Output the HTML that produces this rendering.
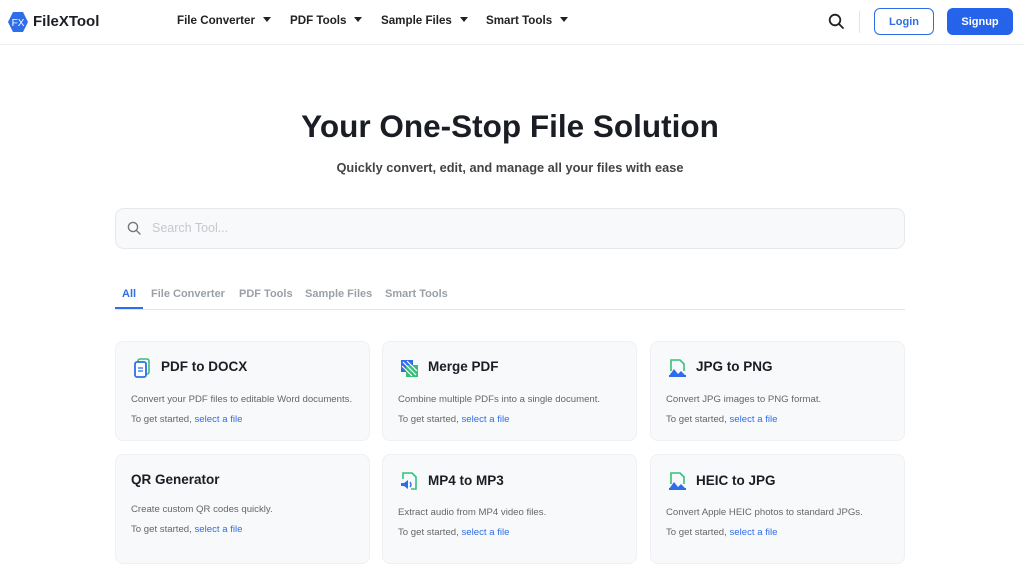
<!DOCTYPE html>
<html><head><meta charset="utf-8"><style>
*{margin:0;padding:0;box-sizing:border-box}
body{width:1024px;height:559px;overflow:hidden;background:#fff;font-family:"Liberation Sans",sans-serif;color:#1a1d23;position:relative}
.hdr{position:absolute;left:0;top:0;width:1024px;height:45px;border-bottom:1px solid #eceef1}
.abs{position:absolute}
.nav{font-size:11.6px;font-weight:bold;color:#222;top:14px}
.nav:after{content:"";display:inline-block;margin-left:8px;border-left:4px solid transparent;border-right:4px solid transparent;border-top:5px solid #222;vertical-align:2px}
.card{position:absolute;width:255px;background:#f8f9fb;border:1px solid #eef0f3;border-radius:8px}
.card h3{position:absolute;left:45px;font-size:13.5px;font-weight:bold;color:#1a1d23}
.card .d{position:absolute;left:15px;font-size:9.6px;color:#666}
.card .l{position:absolute;left:15px;font-size:9.6px;color:#666}
.card .l span{color:#2f6ee8}
.ic{position:absolute;left:17px}
.tab{position:absolute;top:288px;font-size:11px;color:#9aa0a8;font-weight:bold}
</style></head><body>
<div class="hdr"></div>
<svg class="abs" style="left:7px;top:11px" width="22" height="22" viewBox="0 0 22 22"><polygon points="6,1 16,1 21,11 16,21 6,21 1,11" fill="#2f6ee8"/><text x="11" y="15" font-size="10" fill="#fff" text-anchor="middle" font-family="Liberation Sans">FX</text></svg>
<div class="abs" style="left:33px;top:13px;font-size:15px;font-weight:bold">FileXTool</div>
<div class="abs nav" style="left:177px">File Converter</div>
<div class="abs nav" style="left:290px">PDF Tools</div>
<div class="abs nav" style="left:381px">Sample Files</div>
<div class="abs nav" style="left:486px">Smart Tools</div>
<svg class="abs" style="left:828px;top:13px" width="17" height="17" viewBox="0 0 17 17"><circle cx="7" cy="7" r="5.3" fill="none" stroke="#222" stroke-width="1.8"/><line x1="11" y1="11" x2="15" y2="15" stroke="#222" stroke-width="1.8" stroke-linecap="round"/></svg>
<div class="abs" style="left:859px;top:11px;width:1px;height:22px;background:#e2e4e8"></div>
<div class="abs" style="left:874px;top:8px;width:60px;height:27px;border:1px solid #2f6ee8;border-radius:6px;color:#2f6ee8;font-size:11px;font-weight:bold;text-align:center;line-height:26px">Login</div>
<div class="abs" style="left:947px;top:8px;width:66px;height:27px;background:#2563eb;border-radius:6px;color:#fff;font-size:11px;font-weight:bold;text-align:center;line-height:28px">Signup</div>
<div class="abs" style="left:0;width:1020px;top:108px;text-align:center;font-size:31.5px;font-weight:bold;color:#1a1d23">Your One-Stop File Solution</div>
<div class="abs" style="left:0;width:1020px;top:160px;text-align:center;font-size:12.8px;font-weight:bold;color:#444">Quickly convert, edit, and manage all your files with ease</div>
<div class="abs" style="left:115px;top:208px;width:790px;height:41px;background:#f8f9fb;border:1px solid #e6e8ec;border-radius:9px"></div>
<svg class="abs" style="left:127px;top:221px" width="15" height="15" viewBox="0 0 15 15"><circle cx="6" cy="6" r="4.6" fill="none" stroke="#777" stroke-width="1.4"/><line x1="9.5" y1="9.5" x2="13" y2="13" stroke="#777" stroke-width="1.4" stroke-linecap="round"/></svg>
<div class="abs" style="left:152px;top:221px;font-size:12.5px;color:#c4c8ce">Search Tool...</div>
<div class="tab" style="left:122px;color:#2f6ee8">All</div>
<div class="tab" style="left:151px">File Converter</div>
<div class="tab" style="left:239px">PDF Tools</div>
<div class="tab" style="left:305px">Sample Files</div>
<div class="tab" style="left:385px">Smart Tools</div>
<div class="abs" style="left:115px;top:309px;width:790px;height:1px;background:#e2e4e8"></div>
<div class="abs" style="left:115px;top:307px;width:28px;height:2px;background:#2f6ee8"></div>

<div class="card" style="left:115px;top:341px;height:100px">
<svg class="ic" style="top:16px" width="19" height="20" viewBox="0 0 19 20"><rect x="5" y="1" width="11" height="15" rx="2" fill="none" stroke="#35c07a" stroke-width="1.6"/><rect x="2" y="4" width="11" height="15" rx="2" fill="#fff" stroke="#2f6ee8" stroke-width="1.8"/><line x1="5" y1="10" x2="10" y2="10" stroke="#2f6ee8" stroke-width="1.3"/><line x1="5" y1="13" x2="10" y2="13" stroke="#2f6ee8" stroke-width="1.3"/></svg>
<h3 style="top:17px">PDF to DOCX</h3><div class="d" style="top:52px">Convert your PDF files to editable Word documents.</div><div class="l" style="top:72px">To get started, <span>select a file</span></div></div>

<div class="card" style="left:382px;top:341px;height:100px">
<svg class="ic" style="top:17px" width="19" height="19" viewBox="0 0 19 19"><rect x="1" y="1" width="12" height="12" fill="#2f6ee8"/><rect x="6" y="6" width="12" height="12" fill="#35c07a"/><path d="M3 3L16 16M7 2L17 12M2 7L12 17" stroke="#fff" stroke-width="1.2"/></svg>
<h3 style="top:17px">Merge PDF</h3><div class="d" style="top:52px">Combine multiple PDFs into a single document.</div><div class="l" style="top:72px">To get started, <span>select a file</span></div></div>

<div class="card" style="left:650px;top:341px;height:100px">
<svg class="ic" style="top:16px" width="19" height="20" viewBox="0 0 19 20"><path d="M3 13V2h9l4 4v7" fill="none" stroke="#35c07a" stroke-width="1.6"/><path d="M1 18l5-7 4 5 3-3 5 5z" fill="#2f6ee8"/><rect x="1" y="17" width="17" height="2" fill="#2f6ee8"/></svg>
<h3 style="top:17px">JPG to PNG</h3><div class="d" style="top:52px">Convert JPG images to PNG format.</div><div class="l" style="top:72px">To get started, <span>select a file</span></div></div>

<div class="card" style="left:115px;top:454px;height:110px">
<h3 style="top:17px;left:15px">QR Generator</h3><div class="d" style="top:49px">Create custom QR codes quickly.</div><div class="l" style="top:69px">To get started, <span>select a file</span></div></div>

<div class="card" style="left:382px;top:454px;height:110px">
<svg class="ic" style="top:16px" width="19" height="20" viewBox="0 0 19 20"><path d="M3 8V2h9l4 4v12h-5" fill="none" stroke="#35c07a" stroke-width="1.6"/><path d="M1 12h3l4-3v9l-4-3H1z" fill="#2f6ee8"/><path d="M10 11q2 2.5 0 5" fill="none" stroke="#2f6ee8" stroke-width="1.4"/></svg>
<h3 style="top:18px">MP4 to MP3</h3><div class="d" style="top:52px">Extract audio from MP4 video files.</div><div class="l" style="top:72px">To get started, <span>select a file</span></div></div>

<div class="card" style="left:650px;top:454px;height:110px">
<svg class="ic" style="top:16px" width="19" height="20" viewBox="0 0 19 20"><path d="M3 13V2h9l4 4v7" fill="none" stroke="#35c07a" stroke-width="1.6"/><path d="M1 18l5-7 4 5 3-3 5 5z" fill="#2f6ee8"/><rect x="1" y="17" width="17" height="2" fill="#2f6ee8"/></svg>
<h3 style="top:18px">HEIC to JPG</h3><div class="d" style="top:52px">Convert Apple HEIC photos to standard JPGs.</div><div class="l" style="top:72px">To get started, <span>select a file</span></div></div>
</body></html>
